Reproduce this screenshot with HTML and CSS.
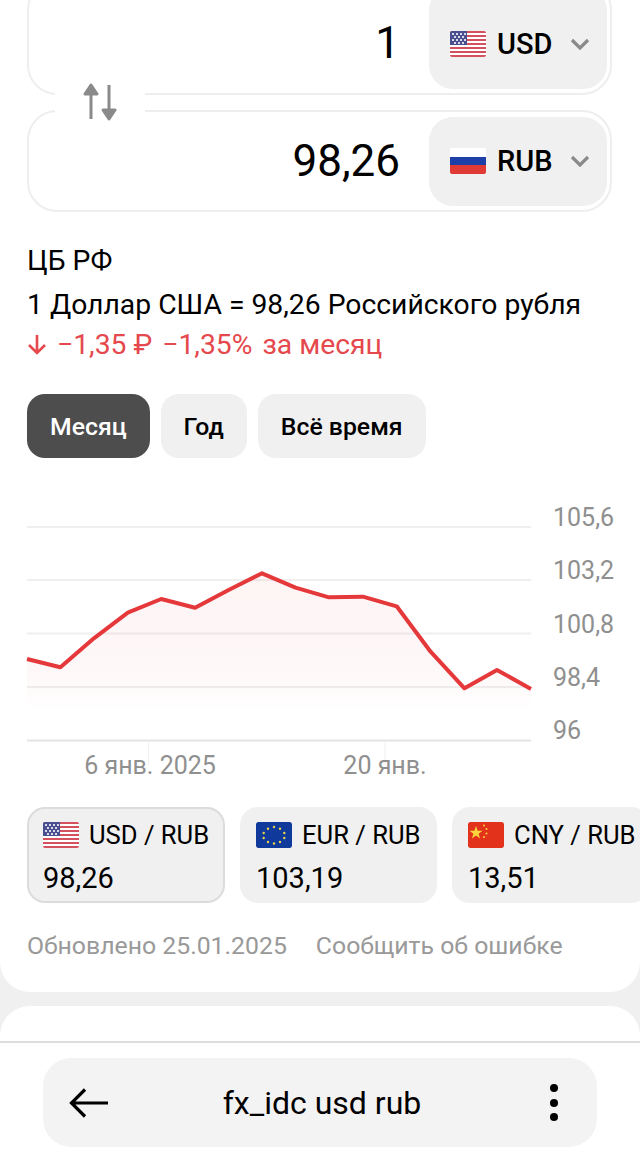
FILE: index.html
```html
<!DOCTYPE html>
<html lang="ru">
<head>
    <meta charset="UTF-8">
    <meta name="viewport" content="width=device-width, initial-scale=1.0">
    <title>fx_idc usd rub</title>
    <link rel="stylesheet" href="styles.css">
</head>
<body>
    <svg class="sprites" width="0" height="0">
        <defs>
            <symbol id="flag-us" viewBox="0 0 36 26">
                <rect width="36" height="26" fill="#fff"/>
                <g fill="#d4525f">
                    <rect width="36" height="2"/>
                    <rect y="4" width="36" height="2"/>
                    <rect y="8" width="36" height="2"/>
                    <rect y="12" width="36" height="2"/>
                    <rect y="16" width="36" height="2"/>
                    <rect y="20" width="36" height="2"/>
                    <rect y="24" width="36" height="2"/>
                </g>
                <rect width="17" height="14" fill="#4a4f8f"/>
                <g fill="#d8daea">
                    <rect x="2" y="2" width="2" height="2"/><rect x="6" y="2" width="2" height="2"/><rect x="10" y="2" width="2" height="2"/><rect x="14" y="2" width="2" height="2"/>
                    <rect x="4" y="5" width="2" height="2"/><rect x="8" y="5" width="2" height="2"/><rect x="12" y="5" width="2" height="2"/>
                    <rect x="2" y="8" width="2" height="2"/><rect x="6" y="8" width="2" height="2"/><rect x="10" y="8" width="2" height="2"/><rect x="14" y="8" width="2" height="2"/>
                    <rect x="4" y="11" width="2" height="2"/><rect x="8" y="11" width="2" height="2"/><rect x="12" y="11" width="2" height="2"/>
                </g>
            </symbol>
            <symbol id="chevron" viewBox="0 0 20 12">
                <path d="M2 2l8 8 8-8" fill="none" stroke="#8a8a8a" stroke-width="3.2"/>
            </symbol>
        </defs>
    </svg>

    <main class="card">
        <section class="converter">
            <div class="field field-top">
                <div class="amount">1</div>
                <div class="currency">
                    <svg class="flag"><use href="#flag-us"/></svg>
                    <span>USD</span>
                    <svg class="chevron"><use href="#chevron"/></svg>
                </div>
            </div>
            <div class="field">
                <div class="amount">98,26</div>
                <div class="currency">
                    <svg class="flag" viewBox="0 0 36 26">
                        <rect width="36" height="9" fill="#fff"/>
                        <rect y="9" width="36" height="8" fill="#1c3fa8"/>
                        <rect y="17" width="36" height="9" fill="#e03a36"/>
                    </svg>
                    <span>RUB</span>
                    <svg class="chevron"><use href="#chevron"/></svg>
                </div>
            </div>
            <div class="swap">
                <svg width="34" height="38" viewBox="0 0 34 38">
                    <path d="M8 36V8M2 11l6-9 6 9z" fill="#8a8a8a" stroke="#8a8a8a" stroke-width="3" stroke-linejoin="round"/>
                    <path d="M26 2v28M20 27l6 9 6-9z" fill="#8a8a8a" stroke="#8a8a8a" stroke-width="3" stroke-linejoin="round"/>
                </svg>
            </div>
        </section>

        <div class="source">ЦБ РФ</div>
        <div class="rate">1 Доллар США = 98,26 Российского рубля</div>
        <div class="change">
            <svg width="20" height="22" viewBox="0 0 20 22"><path d="M10 1v18M2 11l8 8 8-8" fill="none" stroke="#e5484d" stroke-width="2.6"/></svg>
            <span>−1,35 ₽</span>
            <span>−1,35%</span>
            <span>за месяц</span>
        </div>

        <div class="tabs">
            <div class="tab tab-active">Месяц</div>
            <div class="tab">Год</div>
            <div class="tab">Всё время</div>
        </div>

        <svg class="chart" width="640" height="300" viewBox="0 490 640 300">
            <defs>
                <linearGradient id="area" x1="0" y1="573" x2="0" y2="712" gradientUnits="userSpaceOnUse">
                    <stop offset="0" stop-color="#e5484d" stop-opacity="0.06"/>
                    <stop offset="0.7" stop-color="#e5484d" stop-opacity="0.04"/>
                    <stop offset="1" stop-color="#e5484d" stop-opacity="0"/>
                </linearGradient>
            </defs>
            <g stroke="#efefef" stroke-width="2">
                <path d="M27 527H531M27 580H531M27 633.500H531M27 687H531"/>
                <path d="M27 740.500H531" stroke="#e4e4e4"/>
                <path d="M148.500 741V765M385 741V765" stroke-width="1"/>
            </g>
            <path class="chart-area" d="M27 659L60.400 667.300 93.900 638.300 127.800 612.700 161.200 599 195.100 607.700 228.600 590 262 573.300 295.500 587.700 329 597.300 362.900 596.700 396.700 606.300 430.600 651.700 464.500 688.300 497 670 531 689V712H27Z"/>
            <path class="chart-line" d="M27 659L60.400 667.300 93.900 638.300 127.800 612.700 161.200 599 195.100 607.700 228.600 590 262 573.300 295.500 587.700 329 597.300 362.900 596.700 396.700 606.300 430.600 651.700 464.500 688.300 497 670 531 689"/>
            <g class="chart-labels">
                <text x="553" y="526">105,6</text>
                <text x="553" y="579">103,2</text>
                <text x="553" y="633">100,8</text>
                <text x="553" y="686">98,4</text>
                <text x="553" y="739">96</text>
                <text x="150" y="774" text-anchor="middle">6 янв. 2025</text>
                <text x="385" y="774" text-anchor="middle">20 янв.</text>
            </g>
        </svg>

        <div class="pairs">
            <div class="pair pair-active">
                <div class="pair-name">
                    <svg class="flag"><use href="#flag-us"/></svg>
                    <span>USD / RUB</span>
                </div>
                <div class="pair-value">98,26</div>
            </div>
            <div class="pair">
                <div class="pair-name">
                    <svg class="flag" viewBox="0 0 36 26">
                        <rect width="36" height="26" rx="2" fill="#0f3a9c"/>
                        <g fill="#e8d24a">
                            <circle cx="18" cy="5" r="1.200"/><circle cx="24" cy="6.700" r="1.200"/><circle cx="28.300" cy="11" r="1.200"/><circle cx="28.300" cy="16" r="1.200"/><circle cx="24" cy="20" r="1.200"/><circle cx="18" cy="21.500" r="1.200"/><circle cx="12" cy="20" r="1.200"/><circle cx="7.700" cy="16" r="1.200"/><circle cx="7.700" cy="11" r="1.200"/><circle cx="12" cy="6.700" r="1.200"/>
                        </g>
                    </svg>
                    <span>EUR / RUB</span>
                </div>
                <div class="pair-value">103,19</div>
            </div>
            <div class="pair">
                <div class="pair-name">
                    <svg class="flag" viewBox="0 0 36 26">
                        <rect width="36" height="26" rx="2" fill="#e2321c"/>
                        <path d="M8 4l1.600 4.700 5 0-4 3 1.500 4.800-4.100-2.900-4.100 2.900 1.500-4.800-4-3 5 0z" fill="#f8d63c"/>
                        <g fill="#f8d63c">
                            <circle cx="16" cy="3.500" r="1"/><circle cx="18.500" cy="7" r="1"/><circle cx="18.500" cy="11.500" r="1"/><circle cx="16" cy="15" r="1"/>
                        </g>
                    </svg>
                    <span>CNY / RUB</span>
                </div>
                <div class="pair-value">13,51</div>
            </div>
        </div>

        <div class="footer-links">
            <span>Обновлено 25.01.2025</span>
            <span>Сообщить об ошибке</span>
        </div>
    </main>

    <div class="next-card"></div>

    <nav class="bottom-bar">
        <div class="search-pill">
            <svg width="40" height="30" viewBox="0 0 40 30"><path d="M39 15H3M16 1.500L2.500 15 16 28.500" fill="none" stroke="#000" stroke-width="3.200"/></svg>
            <span class="query">fx_idc usd rub</span>
            <svg width="10" height="40" viewBox="0 0 10 40"><circle cx="5" cy="5" r="4" fill="#000"/><circle cx="5" cy="20" r="4" fill="#000"/><circle cx="5" cy="34" r="4" fill="#000"/></svg>
        </div>
    </nav>
</body>
</html>
```

FILE: styles.css
```css
body {
    margin: 0;
    width: 640px;
    height: 1167px;
    overflow: hidden;
    display: flex;
    flex-direction: column;
    background-color: #f0f0f0;
    font-family: Roboto, sans-serif;
    color: #000;
}

.sprites {
    display: block;
    height: 0;
}

.card {
    background-color: #fff;
    height: 992px;
    flex-shrink: 0;
    box-sizing: border-box;
    border-radius: 0 0 30px 30px;
    overflow: hidden;
}

/* converter */
.converter {
    position: relative;
    margin: -20px 28px 0 27px;
    display: flex;
    flex-direction: column;
    gap: 15px;
}

.field {
    height: 102px;
    box-sizing: border-box;
    border: 2px solid #eeeeee;
    border-radius: 30px;
    padding: 5px 3px 5px 0;
    display: flex;
    align-items: center;
    justify-content: flex-end;
    gap: 29px;
}

.field-top {
    height: 115px;
}

.amount {
    font-size: 44px;
}

.field-top .amount {
    padding-top: 11px;
}

.currency {
    width: 178px;
    height: 89px;
    flex-shrink: 0;
    box-sizing: border-box;
    padding-left: 21px;
    background-color: #f0f0f0;
    border-radius: 24px;
    display: flex;
    align-items: center;
    font-size: 29px;
    font-weight: 500;
}

.field-top .currency {
    height: 102px;
    padding-top: 12px;
}

.currency span {
    width: 62px;
    margin-left: 11px;
}

.flag {
    width: 36px;
    height: 26px;
    flex-shrink: 0;
    border-radius: 2px;
}

.chevron {
    width: 20px;
    height: 12px;
    margin-left: 11px;
}

.swap {
    position: absolute;
    left: 28px;
    top: 102px;
    width: 90px;
    height: 40px;
    background-color: #fff;
    display: flex;
    align-items: center;
    justify-content: center;
}

/* rate text */
.source, .rate, .change {
    margin-left: 27px;
    font-size: 28.3px;
}

.source {
    margin-top: 31px;
    line-height: 36px;
}

.rate {
    margin-top: 8px;
    line-height: 36px;
}

.change {
    margin-top: 4px;
    line-height: 36px;
    color: #e5484d;
    display: flex;
    align-items: center;
    gap: 10px;
}

/* period tabs */
.tabs {
    margin: 31px 0 0 27px;
    display: flex;
    gap: 11px;
}

.tab {
    height: 64px;
    padding: 0 23px;
    background-color: #f0f0f0;
    border-radius: 18px;
    display: flex;
    align-items: center;
    font-size: 24.8px;
    font-weight: 500;
}

.tab-active {
    background-color: #4d4d4d;
    color: #fff;
}

/* chart */
.chart {
    display: block;
    margin-top: 32px;
}

.chart-area {
    fill: url(#area);
}

.chart-line {
    fill: none;
    stroke: #e5383b;
    stroke-width: 4;
    stroke-linejoin: round;
}

.chart-labels text {
    font-size: 25px;
    fill: #8f8f8f;
}

/* pairs */
.pairs {
    margin: 17px 0 0 27px;
    display: flex;
    gap: 15px;
}

.pair {
    width: 197px;
    height: 96px;
    flex-shrink: 0;
    box-sizing: border-box;
    padding: 15px 0 0 16px;
    background-color: #f0f0f0;
    border-radius: 18px;
}

.pair-active {
    width: 198px;
    border: 2px solid #dcdcdc;
    padding: 13px 0 0 14px;
}

.pair-name {
    display: flex;
    align-items: center;
    gap: 10px;
    font-size: 25.6px;
    line-height: 26px;
}

.pair-value {
    margin-top: 14px;
    font-size: 29px;
    line-height: 32px;
}

.footer-links {
    margin: 28px 0 0 27px;
    display: flex;
    gap: 29px;
    font-size: 24.8px;
    line-height: 30px;
    color: #999;
}

.next-card {
    margin-top: 14px;
    height: 60px;
    flex-shrink: 0;
    background-color: #fff;
    border-radius: 30px 30px 0 0;
}

/* bottom bar */
.bottom-bar {
    position: absolute;
    left: 0;
    right: 0;
    top: 1041px;
    height: 126px;
    box-sizing: border-box;
    border-top: 2px solid #dddddd;
    background-color: #fff;
    padding: 15px 43px 0;
}

.search-pill {
    height: 89px;
    box-sizing: border-box;
    padding: 0 38px 0 26px;
    background-color: #f3f3f3;
    border-radius: 28px;
    display: flex;
    align-items: center;
    justify-content: space-between;
}

.query {
    font-size: 32px;
    margin-right: 14px;
}
```
